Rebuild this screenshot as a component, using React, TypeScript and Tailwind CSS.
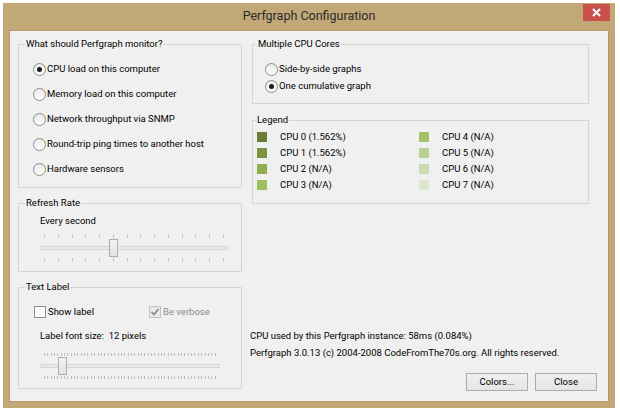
import React from 'react';

interface RadioProps {
  label: string;
  checked?: boolean;
  rowClass: string;
}

function Radio({ label, checked, rowClass }: RadioProps) {
  return (
    <div className={`flex items-center shrink-0 ${rowClass}`}>
      <span className="w-[13px] h-[13px] rounded-full border border-[#8c8c8c] bg-linear-to-b from-[#e9e9e9] to-white flex items-center justify-center shrink-0">
        {checked && <span className="w-[5px] h-[5px] rounded-full bg-[#1a1a1a]" />}
      </span>
      <span className="ml-[1px] whitespace-nowrap">{label}</span>
    </div>
  );
}

function Ticks({ count }: { count: number }) {
  return (
    <div className="flex justify-between px-[4px] h-[3px]">
      {Array.from({ length: count }).map((_, i) => (
        <span key={i} className="w-px h-[3px] bg-[#bdbdbd]" />
      ))}
    </div>
  );
}

interface SliderProps {
  ticks: number;
  widthClass: string;
  thumbClass: string;
}

function Slider({ ticks, widthClass, thumbClass }: SliderProps) {
  return (
    <div className={`relative h-[26px] ${widthClass}`}>
      <Ticks count={ticks} />
      <div className="mt-[8px] h-[4px] border border-[#d6d6d6] bg-[#e7eaea]" />
      <div className="mt-[8px]">
        <Ticks count={ticks} />
      </div>
      {/* thumb */}
      <div
        className={`absolute top-[4px] w-[9px] h-[18px] border border-[#acacac] bg-linear-to-b from-[#f2f2f2] to-[#e3e3e3] ${thumbClass}`}
      />
    </div>
  );
}

const legendItems = [
  { name: 'CPU 0 (1.562%)', color: 'bg-[#6a7d38]' },
  { name: 'CPU 1 (1.562%)', color: 'bg-[#7b9340]' },
  { name: 'CPU 2 (N/A)', color: 'bg-[#8fae4f]' },
  { name: 'CPU 3 (N/A)', color: 'bg-[#9dbf5c]' },
];

const legendItems2 = [
  { name: 'CPU 4 (N/A)', color: 'bg-[#a5c26b]' },
  { name: 'CPU 5 (N/A)', color: 'bg-[#b9d194]' },
  { name: 'CPU 6 (N/A)', color: 'bg-[#cadcb0]' },
  { name: 'CPU 7 (N/A)', color: 'bg-[#dde6cf]' },
];

export default function App() {
  return (
    <div className="w-[620px] h-[409px] bg-white pt-[3px] pl-[3px] font-['Roboto',sans-serif] text-[9.5px] text-black">
      <div className="w-[612px] h-[405px] bg-[#c2a877] flex flex-col px-[6px] pb-[6px]">
        {/* Title bar */}
        <div className="h-[27px] shrink-0 flex items-center relative">
          <div className="flex-1 text-center text-[12.5px] text-[#2b2b2b]">Perfgraph Configuration</div>
          <button
            type="button"
            className="absolute right-[-1px] top-[1px] w-[27px] h-[17px] bg-[#c9504b] flex items-center justify-center"
          >
            <svg width="9" height="9" viewBox="0 0 9 9">
              <path d="M1 1 L8 8 M8 1 L1 8" stroke="white" strokeWidth="2" />
            </svg>
          </button>
        </div>

        {/* Client area */}
        <div className="flex-1 min-h-0 bg-[#f0f0f0] border border-[#b39c6e] flex pl-[8px] pt-[6px]">
          {/* Left column */}
          <div className="w-[224px] flex flex-col gap-[8px]">
            <fieldset className="h-[151px] shrink-0 border border-[#d5d5d5]">
              <legend className="ml-[6px] px-[1px] leading-[14px]">What should Perfgraph monitor?</legend>
              <div className="pt-[6px] pl-[14px] flex flex-col">
                <Radio label="CPU load on this computer" checked rowClass="h-[25px]" />
                <Radio label="Memory load on this computer" rowClass="h-[25px]" />
                <Radio label="Network throughput via SNMP" rowClass="h-[25px]" />
                <Radio label="Round-trip ping times to another host" rowClass="h-[25px]" />
                <Radio label="Hardware sensors" rowClass="h-[25px]" />
              </div>
            </fieldset>

            <fieldset className="h-[76px] shrink-0 border border-[#d5d5d5]">
              <legend className="ml-[6px] px-[1px] leading-[14px]">Refresh Rate</legend>
              <div className="pl-[21px]">
                <div className="mt-[3px] leading-[15px]">Every second</div>
                <div className="mt-[7px]">
                  <Slider ticks={14} widthClass="w-[188px]" thumbClass="left-[69px]" />
                </div>
              </div>
            </fieldset>

            <fieldset className="h-[109px] shrink-0 border border-[#d5d5d5]">
              <legend className="ml-[6px] px-[1px] leading-[14px]">Text Label</legend>
              <div className="mt-[10px] h-[16px] pl-[15px] flex items-center">
                <div className="w-[115px] flex items-center">
                  <span className="w-[12px] h-[12px] border border-[#8c8c8c] bg-white shrink-0" />
                  <span className="ml-[2px]">Show label</span>
                </div>
                <div className="flex items-center">
                  <span className="w-[12px] h-[12px] border border-[#c4c4c4] bg-[#e8e8e8] shrink-0 flex items-center justify-center">
                    <svg width="10" height="10" viewBox="0 0 10 10">
                      <path d="M1.5 5 L4 7.5 L8.5 2" fill="none" stroke="#858585" strokeWidth="1.6" />
                    </svg>
                  </span>
                  <span className="ml-[2px] text-[#8d8d8d]">Be verbose</span>
                </div>
              </div>
              <div className="pl-[21px]">
                <div className="mt-[8px] leading-[15px] whitespace-pre">Label font size:  12 pixels</div>
                <div className="mt-[10px]">
                  <Slider ticks={52} widthClass="w-[180px]" thumbClass="left-[18px]" />
                </div>
              </div>
            </fieldset>
          </div>

          {/* Right column */}
          <div className="ml-[8px] w-[347px] flex flex-col">
            <fieldset className="ml-[2px] w-[337px] h-[67px] shrink-0 border border-[#d5d5d5]">
              <legend className="ml-[4px] px-[1px] leading-[14px]">Multiple CPU Cores</legend>
              <div className="mt-[10px] pl-[12px] flex flex-col">
                <Radio label="Side-by-side graphs" rowClass="h-[17px]" />
                <Radio label="One cumulative graph" checked rowClass="h-[17px]" />
              </div>
            </fieldset>

            <fieldset className="ml-[2px] mt-[9px] w-[337px] h-[91px] shrink-0 border border-[#d5d5d5]">
              <legend className="ml-[3px] px-[1px] leading-[14px]">Legend</legend>
              <div className="mt-[2px] pl-[4px] flex">
                <div className="w-[162px] flex flex-col">
                  {legendItems.map((item) => (
                    <div key={item.name} className="h-[16px] flex items-center">
                      <span className={`w-[10px] h-[10px] ${item.color}`} />
                      <span className="ml-[13px]">{item.name}</span>
                    </div>
                  ))}
                </div>
                <div className="flex flex-col">
                  {legendItems2.map((item) => (
                    <div key={item.name} className="h-[16px] flex items-center">
                      <span className={`w-[10px] h-[10px] ${item.color}`} />
                      <span className="ml-[13px]">{item.name}</span>
                    </div>
                  ))}
                </div>
              </div>
            </fieldset>

            <div className="mt-[123px] leading-[17px] shrink-0 whitespace-nowrap">
              <div>CPU used by this Perfgraph instance: 58ms (0.084%)</div>
              <div>Perfgraph 3.0.13 (c) 2004-2008 CodeFromThe70s.org. All rights reserved.</div>
            </div>

            <div className="mt-[12px] shrink-0 flex justify-end gap-[7px]">
              <button
                type="button"
                className="w-[62px] h-[18px] border border-[#acacac] bg-linear-to-b from-[#f0f0f0] to-[#e5e5e5] leading-none"
              >
                Colors...
              </button>
              <button
                type="button"
                className="w-[62px] h-[18px] border border-[#acacac] bg-linear-to-b from-[#f0f0f0] to-[#e5e5e5] leading-none"
              >
                Close
              </button>
            </div>
          </div>
        </div>
      </div>
    </div>
  );
}
